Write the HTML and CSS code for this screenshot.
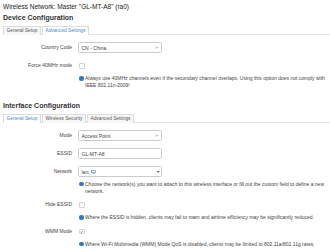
FILE: index.html
```html
<!DOCTYPE html>
<html lang="en">

<head>
    <meta charset="UTF-8" />
    <title>Wireless Network</title>
    <link rel="stylesheet" href="styles.css">
</head>

<body>
    <h2>Wireless Network: Master "GL-MT-A8" (ra0)</h2>

    <h3>Device Configuration</h3>
    <ul class="tabs">
        <li>General Setup</li>
        <li class="active">Advanced Settings</li>
    </ul>

    <div class="row">
        <label>Country Code</label>
        <div class="field">
            <div class="select">CN - China<svg class="caret" viewBox="0 0 4 3"><polyline points="0.5,0.8 2,2.2 3.5,0.8" /></svg></div>
        </div>
    </div>

    <div class="row">
        <label>Force 40MHz mode</label>
        <div class="field">
            <div class="check-wrap"><span class="checkbox"></span></div>
            <div class="help">
                <span class="help-icon"></span>
                <span>Always use 40MHz channels even if the secondary channel overlaps. Using this option does not comply with IEEE 802.11n-2009!</span>
            </div>
        </div>
    </div>

    <h3 class="second">Interface Configuration</h3>
    <ul class="tabs">
        <li class="active">General Setup</li>
        <li>Wireless Security</li>
        <li>Advanced Settings</li>
    </ul>

    <div class="row">
        <label>Mode</label>
        <div class="field">
            <div class="select">Access Point<svg class="caret" viewBox="0 0 4 3"><polyline points="0.5,0.8 2,2.2 3.5,0.8" /></svg></div>
        </div>
    </div>

    <div class="row">
        <label>ESSID</label>
        <div class="field">
            <div class="input">GL-MT-A8</div>
        </div>
    </div>

    <div class="row">
        <label>Network</label>
        <div class="field">
            <div class="select">lan:
                <svg class="net-icon" viewBox="0 0 6 5">
                    <rect x="0.5" y="0.5" width="5" height="3" fill="#d8ecff" stroke="#3a7cc4" stroke-width="0.6" />
                    <rect x="1.5" y="3.5" width="3" height="1" fill="#6aa84f" />
                </svg>
                <span class="dot-caret">▾</span>
            </div>
            <div class="help help-near">
                <span class="help-icon"></span>
                <span>Choose the network(s) you want to attach to this wireless interface or fill out the custom field to define a new network.</span>
            </div>
        </div>
    </div>

    <div class="row after-help">
        <label>Hide ESSID</label>
        <div class="field">
            <div class="check-wrap"><span class="checkbox"></span></div>
            <div class="help">
                <span class="help-icon"></span>
                <span>Where the ESSID is hidden, clients may fail to roam and airtime efficiency may be significantly reduced.</span>
            </div>
        </div>
    </div>

    <div class="row after-help">
        <label>WMM Mode</label>
        <div class="field">
            <div class="check-wrap">
                <span class="checkbox">
                    <svg viewBox="0 0 5 5"><polyline points="1,2.6 2,3.6 4,1.4" /></svg>
                </span>
            </div>
            <div class="help">
                <span class="help-icon"></span>
                <span>Where Wi-Fi Multimedia (WMM) Mode QoS is disabled, clients may be limited to 802.11a/802.11g rates.</span>
            </div>
        </div>
    </div>
</body>

</html>
```

FILE: styles.css
```css
body {
    font-family: "Liberation Sans", Arial, sans-serif;
    margin: 0;
    padding: 0 4px 0 3px;
    background: #fff;
    color: #404040;
    font-size: 5px;
}

h2 {
    margin: 0;
    padding-top: 2.5px;
    font-size: 6.5px;
    line-height: 7px;
    font-weight: normal;
    color: #222;
}

h3 {
    margin: 4px 0 0;
    font-size: 7px;
    line-height: 7px;
    font-weight: bold;
    color: #333;
}

h3.second {
    margin-top: 12.5px;
}

/* Tabs */
.tabs {
    display: flex;
    list-style: none;
    margin: 5.5px -4px 0 0;
    padding: 0;
    border-bottom: 1px solid #e2e2e2;
    font-size: 4.8px;
}

.tabs li {
    line-height: 8px;
    padding: 0 2.5px;
    margin-right: 1px;
    margin-bottom: -1px;
    border: 1px solid #ddd;
    border-bottom: none;
    background: #f7f7f7;
    color: #555;
}

.tabs li.active {
    background: #fff;
    color: #3a8ad6;
}

/* Form rows */
.row {
    display: grid;
    grid-template-columns: 69px 1fr;
    column-gap: 6px;
    margin-top: 7px;
}

.row.after-help {
    margin-top: 4.5px;
}

.row label {
    text-align: right;
    line-height: 11px;
    color: #444;
}

.select,
.input {
    display: flex;
    align-items: center;
    box-sizing: border-box;
    width: 84px;
    height: 11px;
    padding: 0 2.5px;
    border: 1px solid #ccc;
    border-radius: 1.5px;
    color: #444;
    background: #fff;
}

.caret {
    margin-left: auto;
    width: 3.5px;
    height: 3px;
    fill: none;
    stroke: #555;
    stroke-width: 0.6;
}

.net-icon {
    width: 5px;
    height: 4px;
    margin-left: 1.5px;
}

.dot-caret {
    margin-left: auto;
    font-size: 4px;
    color: #333;
}

.check-wrap {
    height: 12px;
    display: flex;
    align-items: center;
}

.checkbox {
    display: flex;
    box-sizing: border-box;
    width: 5.5px;
    height: 5.5px;
    border: 1px solid #d4d4d4;
    border-radius: 1px;
    margin-left: 1px;
}

.checkbox svg {
    width: 100%;
    height: 100%;
    fill: none;
    stroke: #333;
    stroke-width: 0.8;
}

/* Help text */
.help {
    display: flex;
    gap: 1.5px;
    margin-top: 3px;
    line-height: 7px;
    color: #444;
}

.help.help-near {
    margin-top: 3.5px;
}

.help-icon {
    flex: none;
    width: 4.5px;
    height: 4.5px;
    margin-top: 1.3px;
    margin-left: 1px;
    border-radius: 50%;
    background: #2f78c4;
}
```
